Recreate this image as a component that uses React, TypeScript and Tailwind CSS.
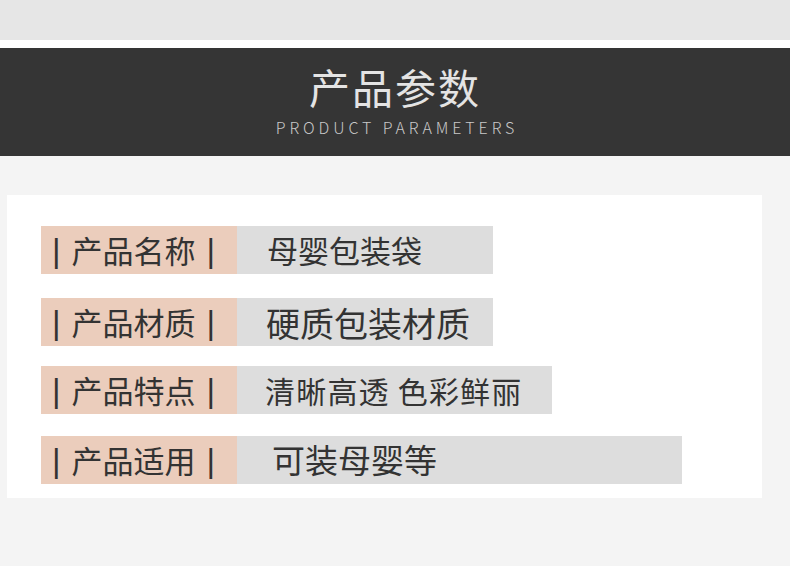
const rows = [
  { label: "产品名称", value: "母婴包装袋", box: "w-[256px] pl-[30px] text-[31px]", mt: "mt-0" },
  { label: "产品材质", value: "硬质包装材质", box: "w-[256px] pl-[29px] text-[34px]", mt: "mt-[24px]" },
  { label: "产品特点", value: "清晰高透 色彩鲜丽", box: "w-[315px] pl-[28px] text-[30px] tracking-[1.2px]", mt: "mt-[20px]" },
  { label: "产品适用", value: "可装母婴等", box: "w-[445px] pl-[35px] text-[33px]", mt: "mt-[22px]" },
];

function Bar() {
  return (
    <span
      className="text-[33px] text-[#333] leading-none"
      style={{ fontFamily: '"Liberation Sans", sans-serif' }}
    >
      |
    </span>
  );
}

export default function App() {
  return (
    <div
      className="w-[790px] h-[566px] bg-[#f4f4f4] overflow-hidden"
      style={{ fontFamily: '"Noto Sans CJK SC", "Noto Sans", sans-serif' }}
    >
      <div className="h-[40px] bg-[#e6e6e6]" />
      <div className="h-[8px] bg-white" />
      <div className="h-[108px] bg-[#353535] flex flex-col items-center">
        <div className="mt-[13px] text-[41px] leading-[50px] text-[#e4e4e4] tracking-[2px]">产品参数</div>
        <div className="mt-[6px] text-[16px] leading-[20px] text-[#c8c8c8] tracking-[3.9px] font-light pl-[4px]">
          PRODUCT PARAMETERS
        </div>
      </div>

      <div className="mt-[39px] ml-[7px] w-[755px] h-[303px] bg-white pt-[31px] pl-[34px] flex flex-col">
        {rows.map((r) => (
          <div key={r.label} className={`flex h-[48px] ${r.mt}`}>
            <div className="w-[196px] bg-[#ebcdbc] flex items-center pl-[11px] text-[31px] text-[#333] whitespace-nowrap">
              <Bar />
              <span className="ml-[11px] mr-[11px]">{r.label}</span>
              <Bar />
            </div>
            <div className={`${r.box} bg-[#dddddd] flex items-center text-[#333] whitespace-nowrap`}>
              {r.value}
            </div>
          </div>
        ))}
      </div>
    </div>
  );
}
